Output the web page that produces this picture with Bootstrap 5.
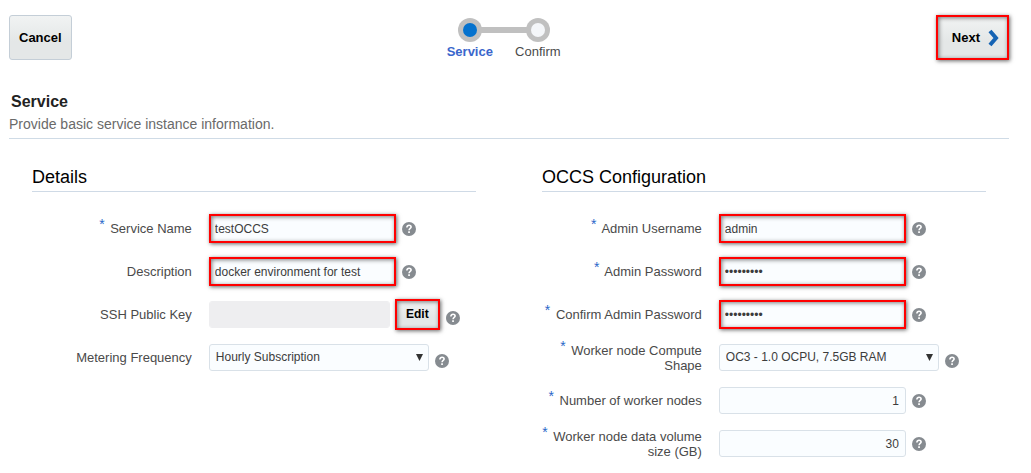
<!DOCTYPE html>
<html lang="en">
<head>
<meta charset="utf-8">
<meta name="viewport" content="width=device-width, initial-scale=1">
<title>Create Service</title>
<link rel="stylesheet" href="https://cdn.jsdelivr.net/npm/bootstrap@5.3.0/dist/css/bootstrap.min.css">
<style>
  body { font-family: "Liberation Sans", Arial, sans-serif; font-size: 13px; line-height: 15px; color: #4a4a4a; background: #fff; }
  .page { padding: 15px 22px 8px 9px; }
  .tool-btn { --bs-btn-padding-x: 9px; --bs-btn-padding-y: 0; --bs-btn-font-size: 13px; --bs-btn-font-weight: 700; --bs-btn-border-color: #c4ced7; --bs-btn-border-radius: 3px; --bs-btn-color: #000; height: 45px; line-height: 15px; background: linear-gradient(#f1f3f3, #e4e7e7 60%); }
  .marked, .marked:focus { border: 2px solid #f00; border-radius: 0; box-shadow: 1px 1px 4px rgba(0,0,0,.6), inset 1px 1px 4px rgba(0,0,0,.5); }
  .next-btn { width: 73px; }
  .steps { width: 136px; }
  .steps li { width: 68px; text-align: center; }
  .steps .current { color: #3a66cc; font-weight: 700; }
  .page-title { font-size: 16px; line-height: 20px; font-weight: 700; color: #222; margin: 32px 0 0 2px; }
  .page-note { font-size: 14px; line-height: 20px; color: #6a6a6a; margin: 2px 0 0; padding-bottom: 4px; border-bottom: 1px solid #cfdbe6; }
  .columns { padding: 26px 23px 0; }
  .columns .row { --bs-gutter-x: 66px; }
  .group-title { font-size: 18px; line-height: 24px; font-weight: 400; color: #000; margin: 0 0 15px; padding-bottom: 2px; border-bottom: 1px solid #cfdae6; }
  .field { min-height: 43px; }
  .field-label { flex: 0 0 36%; text-align: right; margin-right: 17px; }
  .star { color: #2a67c9; font-size: 14px; line-height: 1; position: relative; top: -4px; margin-right: 2px; }
  .field .form-control, .field .form-select { font-size: 12px; line-height: 15px; height: 27px; min-height: 27px; padding: 0 6px; border-radius: 3px; border-color: #d9e1e8; background-color: #fafdff; color: #3c3c3c; }
  .field .form-control { flex: 0 1 187px; }
  .field .form-control.marked { height: 29px; border: 2px solid #f00; border-radius: 0; padding: 0 4px; }
  .field .form-control.key-box { flex-basis: 181px; background-color: #eeeef0; border-color: #eeeef0; }
  .field .form-select { flex: 0 1 220px; background-image: url("data:image/svg+xml,%3Csvg xmlns='http://www.w3.org/2000/svg' viewBox='0 0 7 7'%3E%3Cpath d='M0 0h7L3.5 7z' fill='%23333'/%3E%3C/svg%3E"); background-size: 7px 7px; background-position: right 5px center; padding-right: 18px; }
  .edit-btn { --bs-btn-font-size: 12px; height: 31px; width: 45px; flex: none; margin-left: 5px; padding: 0; }
  .help { width: 14px; height: 14px; flex: none; margin-left: 6px; padding: 0; border: 0; background: none; display: block; }
  .help svg { display: block; }
  .low { align-self: flex-end; margin-bottom: 11px; }
</style>
</head>
<body>
<svg class="d-none" xmlns="http://www.w3.org/2000/svg">
  <symbol id="help" viewBox="0 0 14 14"><circle cx="7" cy="7" r="7" fill="#868b90"/><path d="M4.9 5.4C4.9 4 5.8 3.3 7 3.3s2.1.7 2.1 1.8C9.1 6.500 7.100 6.500 7.100 8.300" fill="none" stroke="#fff" stroke-width="1.600"/><path d="M6.200 9.300h1.700V11H6.200z" fill="#fff"/></symbol>
</svg>
<main class="page">
  <header class="d-flex justify-content-between align-items-start">
    <button type="button" class="btn tool-btn">Cancel</button>
    <nav class="steps" aria-label="Progress">
      <svg class="d-block" width="136" height="29" viewBox="0 0 136 29" aria-hidden="true">
        <path d="M34 15h68" stroke="#c0c0c0" stroke-width="6"/>
        <circle cx="34" cy="15" r="12" fill="#c0c0c0"/><circle cx="34" cy="15" r="7" fill="#0572ce"/>
        <circle cx="102" cy="15" r="12" fill="#c0c0c0"/><circle cx="102" cy="15" r="7" fill="#f4f6f9"/>
      </svg>
      <ol class="list-unstyled d-flex mb-0"><li class="current">Service</li><li>Confirm</li></ol>
    </nav>
    <button type="button" class="btn tool-btn next-btn marked d-flex align-items-center px-0">
      <span class="ms-auto me-2">Next</span>
      <svg class="me-2" width="11" height="18" viewBox="0 0 11 18" aria-hidden="true"><path d="M2 2l6 7-6 7" fill="none" stroke="#1463b4" stroke-width="4"/></svg>
    </button>
  </header>

  <h1 class="page-title">Service</h1>
  <p class="page-note">Provide basic service instance information.</p>

  <form class="columns">
    <div class="row">
      <section class="col-6">
        <h2 class="group-title">Details</h2>
        <div class="field d-flex align-items-center">
          <label class="field-label" for="name"><span class="star">*</span> Service Name</label>
          <input id="name" class="form-control marked" type="text" value="testOCCS">
          <button type="button" class="help" aria-label="Help"><svg width="14" height="14"><use href="#help"/></svg></button>
        </div>
        <div class="field d-flex align-items-center">
          <label class="field-label" for="desc">Description</label>
          <input id="desc" class="form-control marked" type="text" value="docker environment for test">
          <button type="button" class="help" aria-label="Help"><svg width="14" height="14"><use href="#help"/></svg></button>
        </div>
        <div class="field d-flex align-items-center">
          <label class="field-label" for="key">SSH Public Key</label>
          <input id="key" class="form-control key-box" type="text" disabled>
          <button type="button" class="btn tool-btn edit-btn marked">Edit</button>
          <button type="button" class="help low" aria-label="Help"><svg width="14" height="14"><use href="#help"/></svg></button>
        </div>
        <div class="field d-flex align-items-center">
          <label class="field-label" for="meter">Metering Frequency</label>
          <select id="meter" class="form-select"><option>Hourly Subscription</option></select>
          <button type="button" class="help low" aria-label="Help"><svg width="14" height="14"><use href="#help"/></svg></button>
        </div>
      </section>
      <section class="col-6">
        <h2 class="group-title">OCCS Configuration</h2>
        <div class="field d-flex align-items-center">
          <label class="field-label" for="user"><span class="star">*</span> Admin Username</label>
          <input id="user" class="form-control marked" type="text" value="admin">
          <button type="button" class="help" aria-label="Help"><svg width="14" height="14"><use href="#help"/></svg></button>
        </div>
        <div class="field d-flex align-items-center">
          <label class="field-label" for="pw"><span class="star">*</span> Admin Password</label>
          <input id="pw" class="form-control marked" type="password" value="welcome12">
          <button type="button" class="help" aria-label="Help"><svg width="14" height="14"><use href="#help"/></svg></button>
        </div>
        <div class="field d-flex align-items-center">
          <label class="field-label" for="pw2"><span class="star">*</span> Confirm Admin Password</label>
          <input id="pw2" class="form-control marked" type="password" value="welcome12">
          <button type="button" class="help" aria-label="Help"><svg width="14" height="14"><use href="#help"/></svg></button>
        </div>
        <div class="field d-flex align-items-center">
          <label class="field-label" for="shape"><span class="star">*</span> Worker node Compute Shape</label>
          <select id="shape" class="form-select"><option>OC3 - 1.0 OCPU, 7.5GB RAM</option></select>
          <button type="button" class="help low" aria-label="Help"><svg width="14" height="14"><use href="#help"/></svg></button>
        </div>
        <div class="field d-flex align-items-center">
          <label class="field-label" for="nodes"><span class="star">*</span> Number of worker nodes</label>
          <input id="nodes" class="form-control text-end" type="text" inputmode="numeric" value="1">
          <button type="button" class="help" aria-label="Help"><svg width="14" height="14"><use href="#help"/></svg></button>
        </div>
        <div class="field d-flex align-items-center">
          <label class="field-label" for="volume"><span class="star">*</span> Worker node data volume size (GB)</label>
          <input id="volume" class="form-control text-end" type="text" inputmode="numeric" value="30">
          <button type="button" class="help" aria-label="Help"><svg width="14" height="14"><use href="#help"/></svg></button>
        </div>
      </section>
    </div>
  </form>
</main>
<script src="https://cdn.jsdelivr.net/npm/bootstrap@5.3.0/dist/js/bootstrap.bundle.min.js"></script>
</body>
</html>
